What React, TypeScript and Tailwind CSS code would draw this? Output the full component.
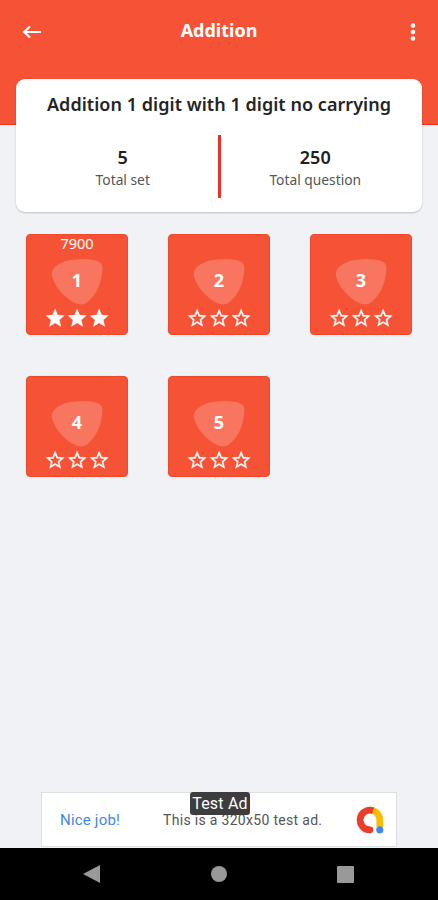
const STAR = 'M12 17.27 18.18 21l-1.64-7.03L22 9.24l-7.19-.61L12 2 9.19 8.63 2 9.24l5.46 4.73L5.82 21z';
const STAR_OUTLINE =
  'M22 9.24l-7.19-.62L12 2 9.19 8.63 2 9.24l5.46 4.73L5.82 21 12 17.27 18.18 21l-1.63-7.03L22 9.24zM12 15.4l-3.76 2.27 1-4.28-3.32-2.88 4.38-.38L12 6.1l1.71 4.04 4.38.38-3.32 2.88 1 4.28L12 15.4z';

function Star({ filled }: { filled: boolean }) {
  return (
    <svg viewBox="0 0 24 24" className="size-[22.3px] shrink-0 fill-white">
      <path d={filled ? STAR : STAR_OUTLINE} stroke="white" strokeWidth="0.2" />
    </svg>
  );
}

type Level = { id: number; score?: number; stars: number };

const levels: Level[] = [
  { id: 1, score: 7900, stars: 3 },
  { id: 2, stars: 0 },
  { id: 3, stars: 0 },
  { id: 4, stars: 0 },
  { id: 5, stars: 0 },
];

function LevelTile({ level }: { level: Level }) {
  return (
    <button className="flex h-[101px] w-[102px] flex-col items-center rounded-[4px] border border-[#f2472b] bg-[#f65236] text-white">
      <span className="h-[23px] text-[14.5px] leading-[17px]">{level.score}</span>
      <span className="grid h-[49px] w-[52px] justify-items-center">
        <svg viewBox="0 0 52 48" className="col-start-1 row-start-1 h-[48px] w-[52px]">
          <path
            d="M1 18C-1 9 11 3 22 1.800C32 .5 43 .8 49 4.500C53 7 51 15 50 21C48 31 42 40 36 44.500C30 49 22 45 15 39C8 33 3 26 1 18Z"
            fill="#f8765f"
          />
        </svg>
        <span className="col-start-1 row-start-1 mt-[10px] text-[18px] leading-6 font-bold">{level.id}</span>
      </span>
      <span className="flex">
        {[0, 1, 2].map((i) => (
          <Star key={i} filled={i < level.stars} />
        ))}
      </span>
    </button>
  );
}

function Stat({ value, label }: { value: number; label: string }) {
  return (
    <div className="flex flex-1 flex-col items-center pt-[10px]">
      <span className="text-[18px] leading-6 font-semibold text-[#202020]">{value}</span>
      <span className="pt-px text-[13.8px] leading-5 text-[#555]">{label}</span>
    </div>
  );
}

export default function App() {
  return (
    <div className="flex h-[900px] w-[438px] flex-col overflow-hidden bg-[#f0f2f6] font-['Noto_Sans','Open_Sans',sans-serif]">
      <header className="h-[125px] shrink-0 border-b border-[#ee351d] bg-[#f65236] text-white">
        <div className="grid h-[62px] grid-cols-[1fr_auto_1fr] items-center pr-[22px] pl-[22px]">
          <svg viewBox="0 0 20 16" className="mt-px h-4 w-5" fill="none" stroke="white" strokeWidth="2.200">
            <path d="M19 8H2M8 2.500 2.200 8l5.800 5.500" />
          </svg>
          <h1 className="-mt-[3px] text-[18px] leading-6 font-bold">Addition</h1>
          <svg viewBox="0 0 6 20" className="mt-px h-5 w-[6px] justify-self-end fill-white">
            <circle cx="3" cy="3.500" r="2.300" />
            <circle cx="3" cy="10" r="2.300" />
            <circle cx="3" cy="16.500" r="2.300" />
          </svg>
        </div>
      </header>

      <main className="flex min-h-0 flex-1 flex-col">
        <section className="z-10 mx-4 -mt-[46px] h-[133px] shrink-0 rounded-[9px] bg-white pt-3 shadow-[0_1px_2px_rgba(0,0,0,0.22)]">
          <h2 className="text-center text-[18px] leading-[26px] font-semibold tracking-[0.04px] whitespace-nowrap text-[#242424]">
            Addition 1 digit with 1 digit no carrying
          </h2>
          <div className="mt-[18px] flex px-3">
            <Stat value={5} label="Total set" />
            <div className="h-[63px] w-[3px] bg-[#ee3029]" />
            <Stat value={250} label="Total question" />
          </div>
        </section>

        <section className="mt-[22px] grid grid-cols-[repeat(3,102px)] gap-x-[40px] gap-y-[41px] pl-[26px]">
          {levels.map((level) => (
            <LevelTile key={level.id} level={level} />
          ))}
        </section>

        <aside className="relative mx-auto mt-auto mb-px flex h-[55px] w-[356px] items-center border border-[#dedfe2] bg-white font-[Roboto,sans-serif]">
          <span className="mt-[2px] ml-[18px] w-[103px] text-[15px] tracking-[0.2px] text-[#4386ee]">Nice job!</span>
          <span className="mt-[2px] text-[14px] tracking-[0.31px] whitespace-nowrap text-[#555]">
            This is a 320x50 test ad.
          </span>
          <svg viewBox="0 0 28 28" className="mr-3 ml-auto size-7" fill="none" strokeWidth="6.800">
            <path d="M14 4.200A9.800 9.800 0 0 1 23.800 14v7" stroke="#fbbc05" />
            <path d="M17 4.700A9.800 9.800 0 1 0 14 23.800" stroke="#ea3d2b" />
            <circle cx="14" cy="23.800" r="3.400" fill="#ea3d2b" />
            <circle cx="23.800" cy="23.800" r="3.600" fill="#4285f4" />
          </svg>
          <span className="absolute -top-px left-[148px] flex h-[23px] w-[60px] items-center justify-center rounded-[3px] bg-[#3d3d3d] pt-px text-[16px] tracking-[0.2px] whitespace-nowrap text-white">
            Test Ad
          </span>
        </aside>
      </main>

      <nav className="flex h-[52px] shrink-0 items-center justify-between bg-black pr-[84px] pl-[83px]">
        <svg viewBox="0 0 18 20" className="h-5 w-[18px] fill-[#999]">
          <path d="M0 10 17 1v18z" />
        </svg>
        <span className="size-4 rounded-full bg-[#999]" />
        <span className="size-[17px] rounded-[1px] bg-[#999]" />
      </nav>
    </div>
  );
}
